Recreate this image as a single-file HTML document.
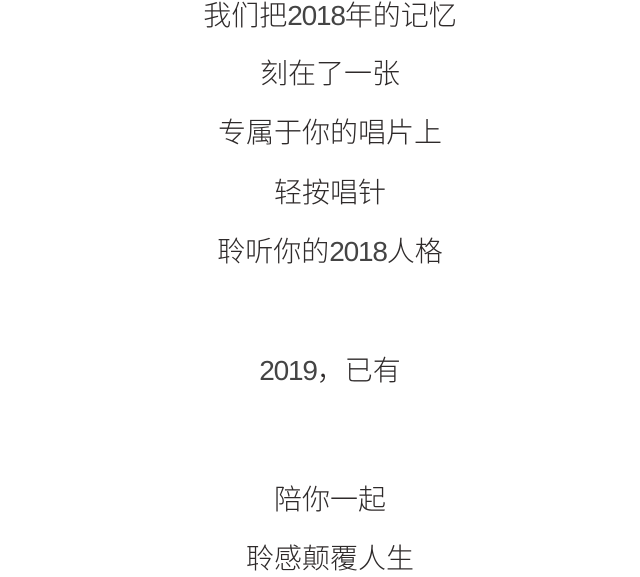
<!DOCTYPE html>
<html><head><meta charset="utf-8"><style>
body{margin:0;width:640px;height:573px;background:#fff;position:relative;overflow:hidden;font-family:"Noto Sans CJK SC","Liberation Sans",sans-serif;color:#2e2a2a;font-weight:300}
div{position:absolute;left:0;width:660px;text-align:center;font-size:28px;line-height:30px;height:30px}
.n{font-family:"Liberation Sans",sans-serif;letter-spacing:-1.2px;font-weight:400;color:#444}
</style></head><body>
<div style="top:-1px">我们把<span class="n">2018</span>年的记忆</div>
<div style="top:57px">刻在了一张</div>
<div style="top:116px">专属于你的唱片上</div>
<div style="top:176px">轻按唱针</div>
<div style="top:235px">聆听你的<span class="n">2018</span>人格</div>
<div style="top:354px"><span class="n">2019</span>，已有</div>
<div style="top:483px">陪你一起</div>
<div style="top:542px">聆感颠覆人生</div>
</body></html>
